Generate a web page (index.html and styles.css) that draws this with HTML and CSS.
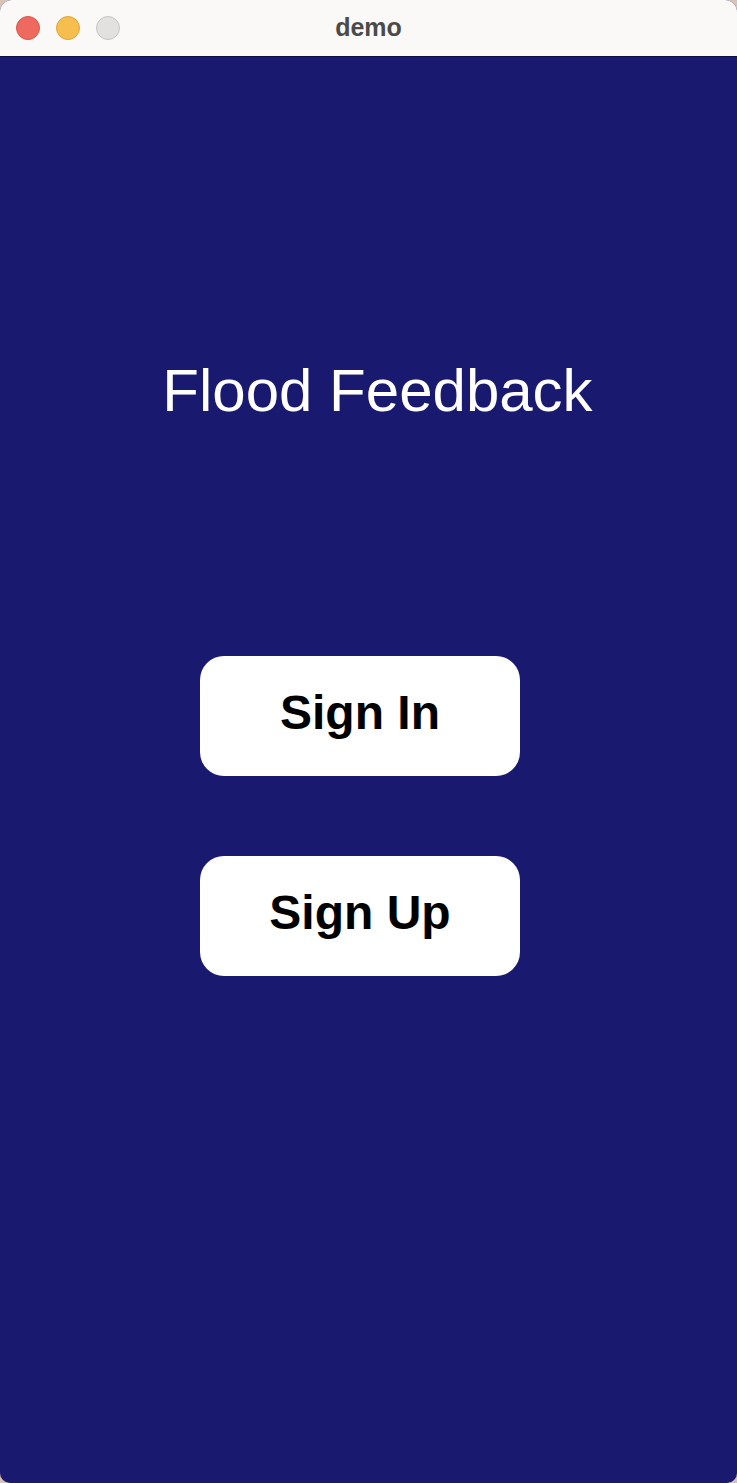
FILE: index.html
```html
<!DOCTYPE html>
<html lang="en">
<head>
    <meta charset="UTF-8">
    <meta name="viewport" content="width=device-width, initial-scale=1.0">
    <title>demo</title>
    <link rel="stylesheet" href="styles.css">
</head>
<body>
    <div class="window">
        <div class="titlebar">
            <div class="lights">
                <span class="light red"></span>
                <span class="light yellow"></span>
                <span class="light grey"></span>
            </div>
            <div class="window-title">demo</div>
        </div>

        <div class="content">
            <h1 class="app-title">Flood Feedback</h1>
            <div class="actions">
                <button class="btn">Sign In</button>
                <button class="btn">Sign Up</button>
            </div>
        </div>
    </div>
</body>
</html>
```

FILE: styles.css
```css
/* desktop behind the window */
html, body {
    margin: 0;
    height: 100%;
}

body {
    background-color: #d9c3b6;
    font-family: 'Liberation Sans', Arial, sans-serif;
}

.window {
    height: 1483px;
    display: flex;
    flex-direction: column;
    border-radius: 12px 12px 10px 10px;
    overflow: hidden;
    background-color: #191970;
}

/* title bar */
.titlebar {
    height: 56px;
    flex-shrink: 0;
    background-color: #faf9f7;
    border-bottom: 1px solid #0d0d4a;
    display: flex;
    align-items: center;
    position: relative;
}

.lights {
    display: flex;
    gap: 16px;
    padding-left: 16px;
}

.light {
    width: 22px;
    height: 22px;
    border-radius: 50%;
    border: 1px solid transparent;
}

.red {
    background-color: #ee6a5f;
    border-color: #d9564b;
}

.yellow {
    background-color: #f5be4f;
    border-color: #dea537;
}

.grey {
    background-color: #e2e1e0;
    border-color: #c6c5c4;
}

.window-title {
    position: absolute;
    left: 0;
    right: 0;
    top: 13px;
    text-align: center;
    font-size: 25px;
    font-weight: bold;
    color: #4a4a4a;
    line-height: 28px;
    pointer-events: none;
}

/* main screen */
.content {
    flex: 1;
    display: flex;
    flex-direction: column;
    align-items: center;
}

.app-title {
    margin: 304px 0 0 18px;
    font-size: 60px;
    font-weight: normal;
    line-height: 1;
    color: #ffffff;
}

.actions {
    margin: 235px 17px 0 0;
    display: flex;
    flex-direction: column;
    gap: 80px;
}

.btn {
    width: 320px;
    height: 120px;
    border: none;
    border-radius: 24px;
    background-color: #ffffff;
    color: #000000;
    font-family: 'Liberation Sans', Arial, sans-serif;
    font-size: 48px;
    font-weight: bold;
    padding: 0 0 8px 0;
    cursor: pointer;
}
```
